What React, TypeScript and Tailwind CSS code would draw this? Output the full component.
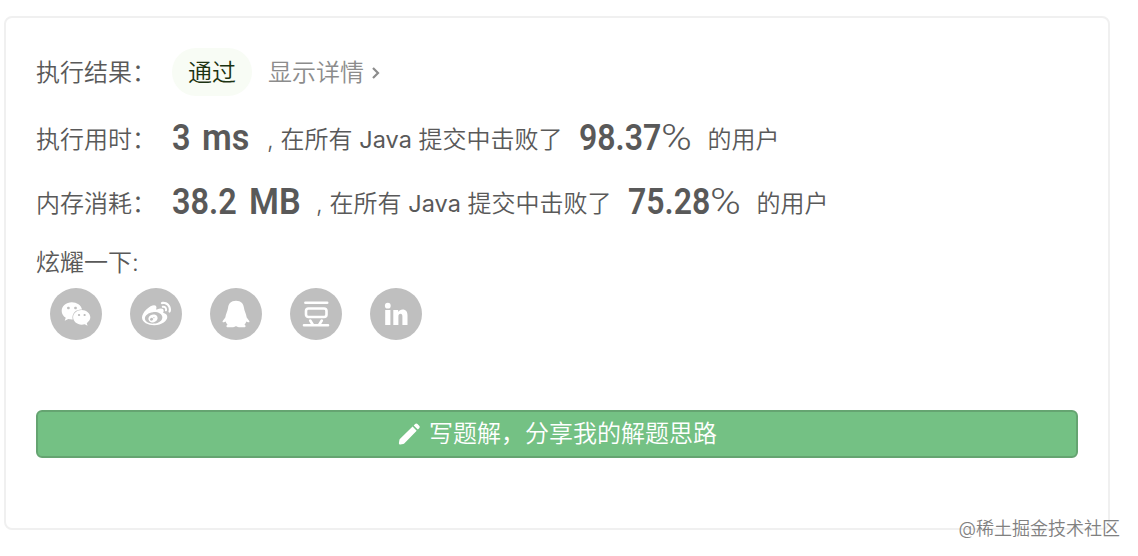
import React from "react";
import { FaWeibo, FaWeixin } from "react-icons/fa";

/* ---------------- ICONS ---------------- */
const QQIcon = () => (
  <svg viewBox="0 0 28 28" className="size-7" fill="currentColor">
    <path d="M14 .8C8.800.8 6.600 3.800 6 8c-.2 1.600-.7 3-1.300 4.600C4 14.500 3.600 16 3.300 17.500L.7 21c-.5 1 .3 1.700 1.300 1.200l1.600-.8c.4 1.300 1.100 2.200 1.900 3l-.9 1c-.7 1 .2 1.900 1.600 1.900h5c1.200 0 2-.5 2.800-1.200.8.700 1.600 1.200 2.800 1.200h5c1.400 0 2.300-.9 1.600-1.900l-.9-1c.8-.8 1.500-1.700 1.900-3l1.600.8c1 .5 1.800-.2 1.300-1.200l-2.600-3.500c-.3-1.500-.7-3-1.400-4.900C22.700 11 22.200 9.600 22 8c-.6-4.200-2.800-7.200-8-7.200z" />
  </svg>
);

const DoubanIcon = () => (
  <svg
    viewBox="0 0 28 28"
    className="size-7"
    fill="none"
    stroke="currentColor"
    strokeWidth="2.6"
    strokeLinecap="round"
  >
    <path d="M3.400 2.800h21.800M2 25.200h24M8.200 20.500l2.800 4.500M19.800 20.500L17 25" />
    <rect x="4" y="8.500" width="20.500" height="8.500" rx="2.500" />
  </svg>
);

const LinkedinIcon = () => (
  <svg viewBox="0 0 24 24" className="size-6" fill="currentColor">
    <circle cx="3.800" cy="3.700" r="2.900" />
    <path d="M1.200 8h5.200v15H1.200zM9.300 8h4.900v2c.9-1.500 2.500-2.400 4.400-2.400 3.400 0 4.900 2.200 4.900 5.900V23h-5.100v-8.600c0-1.800-.6-2.700-1.900-2.700-1.400 0-2.100 1-2.100 2.800V23H9.300z" />
  </svg>
);

const PencilIcon = () => (
  <svg viewBox="0 0 24 24" className="size-6" fill="currentColor">
    <path d="M15.600 4.600l4.100 4.100L7.500 21.200c-.4.400-.8.600-1.300.7l-2.800.5c-.9.200-1.700-.6-1.500-1.500l.5-2.800c.1-.5.300-.9.700-1.300zM16.700 3.500l1.400-1.400c.7-.7 1.700-.7 2.400 0l1.700 1.700c.7.700.7 1.700 0 2.400l-1.400 1.400z" />
  </svg>
);

const shares = [
  { name: "wechat", icon: <FaWeixin className="size-[30px]" /> },
  { name: "weibo", icon: <FaWeibo className="size-[29px]" /> },
  { name: "qq", icon: <QQIcon /> },
  { name: "douban", icon: <DoubanIcon /> },
  { name: "linkedin", icon: <LinkedinIcon /> },
];

/* ---------------- RESULT ROW ---------------- */
type StatRowProps = {
  label: string;
  value: string;
  unit: string;
  percent: string;
  valueClass: string;
  unitClass: string;
};

const StatRow = ({ label, value, unit, percent, valueClass, unitClass }: StatRowProps) => (
  <div className="flex h-16 items-center leading-8 whitespace-pre">
    <span className="w-[136px]">{label}</span>
    <span className={`pb-1 font-[Roboto] text-[36px] font-semibold ${valueClass}`}>
      <span className="inline-block origin-left scale-x-[0.9]">{value}</span>
    </span>
    <span className={`pb-1 font-[Roboto] text-[36px] font-semibold ${unitClass}`}>
      <span className="inline-block origin-left scale-x-[0.95]">{unit}</span>
    </span>
    <span className="ml-[15px]">
      , 在所有 <span className="text-[23.5px] font-normal">Java</span> 提交中击败了
    </span>
    <span className="ml-4 w-[82px] pb-1 font-[Roboto] text-[36px] font-semibold">
      <span className="inline-block origin-left scale-x-[0.89]">{percent}</span>
    </span>
    <span className="w-[31px] pb-1 font-[Roboto] text-[36px] font-light">
      <span className="inline-block origin-left scale-x-[1.16]">%</span>
    </span>
    <span className="ml-4">的用户</span>
  </div>
);

export default function App() {
  return (
    <div className="relative h-[556px] w-[1138px] overflow-hidden bg-white px-1 pt-4 font-[Inter,'Noto_Sans_CJK_SC',sans-serif] text-[24px] font-[350] text-[#595959]">
      <div className="h-[514px] w-[1106px] rounded-lg border-2 border-[#f0f0f0] px-[30px] pt-[30px]">
        <div className="flex h-12 items-center">
          <span className="w-[136px] pt-0.5">执行结果：</span>
          <span className="flex h-12 w-20 items-center justify-center rounded-full bg-[#f8fcf5] pt-0.5 text-[#1c3311]">
            通过
          </span>
          <button className="ml-4 flex items-center pt-0.5 text-[#8c8c8c]">
            显示详情
            <svg
              viewBox="0 0 12 14"
              className="ml-1.5 h-3.5 w-3"
              fill="none"
              stroke="currentColor"
              strokeWidth="2.2"
            >
              <path d="M3 2l5 5-5 5" />
            </svg>
          </button>
        </div>

        <div className="mt-3">
          <StatRow
            label="执行用时："
            value="3"
            unit="ms"
            percent="98.37"
            valueClass="w-[30px]"
            unitClass="w-[50px]"
          />
          <StatRow
            label="内存消耗："
            value="38.2"
            unit="MB"
            percent="75.28"
            valueClass="w-[77px]"
            unitClass="w-[52px]"
          />
        </div>

        <div className="mt-0.5 leading-[50px]">炫耀一下:</div>

        <div className="flex gap-7 pl-3.5">
          {shares.map((s) => (
            <button
              key={s.name}
              aria-label={s.name}
              className="flex size-[52px] items-center justify-center rounded-full bg-[#bfbfbf] text-white"
            >
              {s.icon}
            </button>
          ))}
        </div>

        <button className="mt-[70px] flex h-12 w-full items-center justify-center gap-2 rounded-md border-2 border-[#65a471] bg-[#74c184] text-white">
          <PencilIcon />
          写题解，分享我的解题思路
        </button>
      </div>

      {/* watermark over the card's corner */}
      <div className="absolute right-[18px] bottom-[13px] text-[18px] leading-7 text-[#808080]">
        @稀土掘金技术社区
      </div>
    </div>
  );
}
